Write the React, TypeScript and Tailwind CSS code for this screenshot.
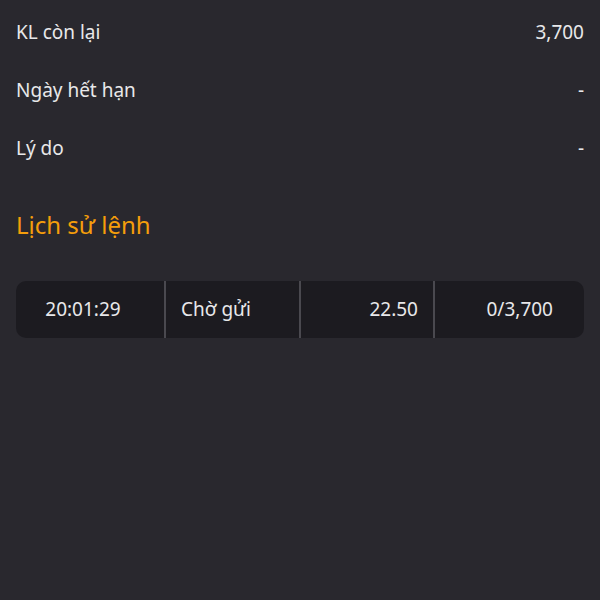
import React from "react";

const rows = [
  { label: "KL còn lại", value: "3,700" },
  { label: "Ngày hết hạn", value: "-" },
  { label: "Lý do", value: "-" },
];

export default function App() {
  return (
    <div
      className="w-[600px] h-[600px] bg-[#29282e] text-[#e8e8ea] px-4 flex flex-col"
      style={{ fontFamily: '"Noto Sans", "Open Sans", sans-serif' }}
    >
      <div className="flex flex-col pt-[3px]">
        {rows.map((r) => (
          <div key={r.label} className="h-[58px] flex items-center justify-between text-[19px]">
            <span>{r.label}</span>
            <span>{r.value}</span>
          </div>
        ))}
      </div>
      <div className="mt-[27px] h-[42px] flex items-center text-[24px] text-[#f59e0b]">
        Lịch sử lệnh
      </div>
      <div className="mt-[35px] h-[57px] rounded-[10px] bg-[#1c1b20] flex text-[19px]">
        <div className="w-[150px] flex items-center justify-center pr-[14px] border-r-2 border-[#4a494f]">
          20:01:29
        </div>
        <div className="w-[135px] flex items-center pl-[15px] border-r-2 border-[#4a494f]">
          Chờ gửi
        </div>
        <div className="w-[134px] flex items-center justify-end pr-[15px] border-r-2 border-[#4a494f]">
          22.50
        </div>
        <div className="flex-1 flex items-center justify-end pr-[31px]">0/3,700</div>
      </div>
    </div>
  );
}
